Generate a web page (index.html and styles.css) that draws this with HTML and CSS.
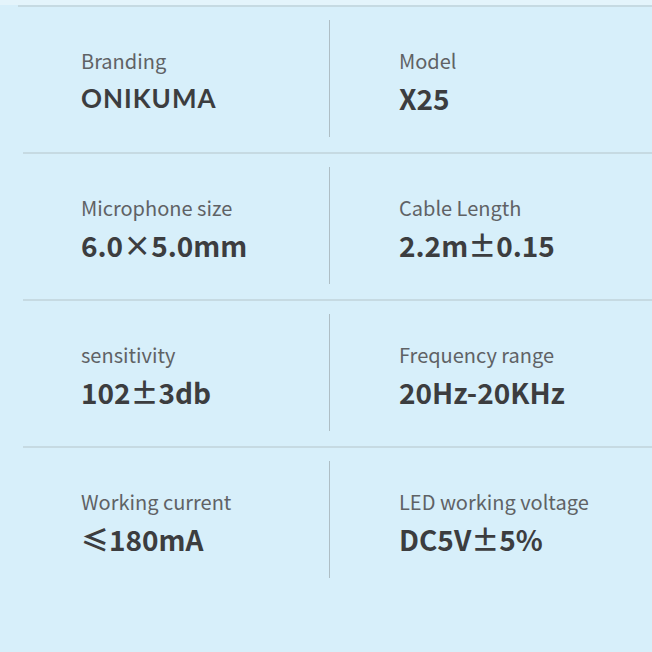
FILE: index.html
```html
<!DOCTYPE html>
<html>
<head>
<meta charset="utf-8">
<link rel="stylesheet" href="styles.css">
</head>
<body>
<div class="page">
  <div class="top-strip"></div>
  <div class="top-line"></div>
  <div class="specs">
    <div class="row">
      <div class="cell left">
        <div class="label">Branding</div>
        <div class="value brand">ONIKUMA</div>
      </div>
      <div class="cell right">
        <div class="label">Model</div>
        <div class="value">X25</div>
      </div>
    </div>
    <div class="row">
      <div class="cell left">
        <div class="label">Microphone size</div>
        <div class="value">6.0×5.0mm</div>
      </div>
      <div class="cell right">
        <div class="label">Cable Length</div>
        <div class="value">2.2m±0.15</div>
      </div>
    </div>
    <div class="row">
      <div class="cell left">
        <div class="label">sensitivity</div>
        <div class="value">102±3db</div>
      </div>
      <div class="cell right">
        <div class="label">Frequency range</div>
        <div class="value">20Hz-20KHz</div>
      </div>
    </div>
    <div class="row last">
      <div class="cell left">
        <div class="label">Working current</div>
        <div class="value">≤180mA</div>
      </div>
      <div class="cell right">
        <div class="label">LED working voltage</div>
        <div class="value">DC5V±5%</div>
      </div>
    </div>
  </div>
</div>
</body>
</html>
```
FILE: styles.css
```css
html, body {
  margin: 0;
  padding: 0;
  background: #d7effa;
}
.page {
  width: 652px;
  height: 652px;
  overflow: hidden;
  background: #d7effa;
  font-family: "Noto Sans CJK SC", "Noto Sans", sans-serif;
}
.top-strip {
  height: 5px;
  background: #e4f4fb;
}
.top-line {
  height: 2px;
  margin-left: 18px;
  background: #c6dae2;
}
.specs {
  padding-left: 23px;
}
.row {
  display: grid;
  grid-template-columns: 307px 1fr;
  height: 147px;
  box-sizing: border-box;
  padding: 13px 0 15px;
  border-bottom: 2px solid #c6dae2;
}
.row.last {
  border-bottom: none;
  padding-bottom: 17px;
}
.cell {
  padding-top: 31px;
}
.cell.left {
  padding-left: 58px;
  border-right: 1px solid #aebec5;
}
.cell.right {
  padding-left: 69px;
}
.label {
  font-size: 20px;
  line-height: 20px;
  color: #5f6265;
  font-weight: 400;
}
.value {
  margin-top: 13px;
  font-size: 28px;
  line-height: 28px;
  font-weight: 600;
  color: #3c3d3f;
}
.value.brand {
  font-family: "Lato", sans-serif;
  font-size: 26px;
  letter-spacing: 1px;
  font-weight: 700;
}
```
